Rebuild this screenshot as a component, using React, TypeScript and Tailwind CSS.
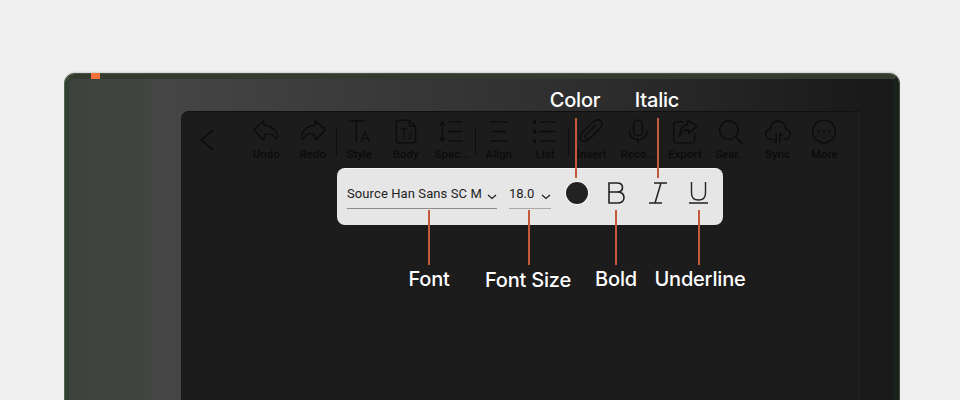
import React from 'react';

const ink = '#0b0b0b';

// Иконки панели (на тёмном фоне почти не видны, как на скриншоте)
const icons: Record<string, React.ReactNode> = {
  undo: <path d="M2 13 L13 3 L14 8 C21 8 29 13 29 21 C29 24 27 24 26 22 C24 18 19 17 15 18 L13 25 Z" />,
  redo: <path d="M30 13 L19 3 L18 8 C11 8 3 13 3 21 C3 24 5 24 6 22 C8 18 13 17 17 18 L19 25 Z" />,
  style: (
    <>
      <path d="M4 3 H22 M13 3 V27" />
      <path d="M18 27 L23 15 L28 27 M20 23 H26" strokeWidth="1.2" />
    </>
  ),
  body: (
    <>
      <path d="M8 2 H20 L27 9 V25 Q27 28 24 28 H8 Q5 28 5 25 V5 Q5 2 8 2 Z M20 2 V9 H27" />
      <path d="M10 12 H18 M14 12 V23 M19 17 H23 M19 20 H23 M19 23 H23" strokeWidth="1.3" />
    </>
  ),
  spacing: <path d="M11 4 H28 M11 15 H28 M11 26 H28 M5 5 V25 M2 8 L5 4 L8 8 M2 22 L5 26 L8 22" />,
  align: <path d="M6 4 H26 M8 15 H24 M6 26 H26" />,
  list: (
    <>
      <path d="M10 4 H28 M10 15 H28 M10 26 H28" />
      <path d="M4 3 V5 M4 14 V16 M4 25 V27" strokeWidth="3" strokeLinecap="round" />
    </>
  ),
  insert: <path d="M24 13 L13 24 C10 27 6 27 4 25 C2 23 2 19 5 16 L17 4 C20 1 24 1 26 3 C28 5 28 9 25 12 L14 22 C12 24 10 24 9 23 C8 22 8 20 10 18 L20 8" />,
  record: (
    <>
      <rect x="11" y="2" width="10" height="18" rx="5" />
      <path d="M6 14 C6 28 26 28 26 14 M16 24 V29" />
    </>
  ),
  export: (
    <>
      <path d="M14 4 H7 Q3 4 3 8 V24 Q3 28 7 28 H23 Q27 28 27 24 V17" />
      <path d="M19 2 L30 9 L20 17 V13 C15 13 11 16 10 21 C9 14 13 8 19 7 Z" />
    </>
  ),
  search: <path d="M13.5 3 A10.5 10.5 0 1 0 13.6 3 Z M21 21 L29 29" />,
  sync: (
    <>
      <path d="M10 24 H8 C4 24 2 21 2 18 C2 15 4 13 7 13 C7 7 11 3 16 3 C21 3 25 7 25 12 C28 13 30 15 30 18 C30 21 28 24 24 24 H22" />
      <path d="M14 17 V28 M11 25 L14 28 M18 28 V17 M21 20 L18 17" strokeWidth="1.4" />
    </>
  ),
  more: (
    <>
      <circle cx="16" cy="15" r="13" />
      <path d="M10 15 V15.1 M16 15 V15.1 M22 15 V15.1" strokeWidth="2.6" strokeLinecap="round" />
    </>
  ),
};

const tools: (string[] | null)[] = [
  ['undo', 'Undo'],
  ['redo', 'Redo'],
  null,
  ['style', 'Style'],
  ['body', 'Body'],
  ['spacing', 'Spac...'],
  null,
  ['align', 'Align'],
  ['list', 'List'],
  null,
  ['insert', 'Insert'],
  ['record', 'Reco...'],
  ['export', 'Export'],
  ['search', 'Sear...'],
  ['sync', 'Sync'],
  ['more', 'More'],
];

const Chevron = () => (
  <svg width="10" height="6" viewBox="0 0 10 6" fill="none" stroke="#222" strokeWidth="1.3">
    <path d="M1 1 L5 4.5 L9 1" />
  </svg>
);

const callouts = [
  { label: 'Color', x: 'left-[576px]', line: 'top-[118px] h-[60px]', text: 'left-[575px] top-[86px]' },
  { label: 'Italic', x: 'left-[658px]', line: 'top-[118px] h-[60px]', text: 'left-[657px] top-[86px]' },
  { label: 'Font', x: 'left-[429px]', line: 'top-[210px] h-[55px]', text: 'left-[429px] top-[265px]' },
  { label: 'Font Size', x: 'left-[529px]', line: 'top-[210px] h-[55px]', text: 'left-[528px] top-[266px]' },
  { label: 'Bold', x: 'left-[616px]', line: 'top-[210px] h-[55px]', text: 'left-[616px] top-[265px]' },
  { label: 'Underline', x: 'left-[699px]', line: 'top-[210px] h-[55px]', text: 'left-[700px] top-[265px]' },
];

export default function App() {
  return (
    <div className="relative h-[400px] w-[960px] overflow-hidden bg-[#f0f0f0] pl-[65px] pr-[61px] pt-[74px] font-['Roboto',sans-serif]">
      {/* Корпус планшета */}
      <div className="relative h-[340px] rounded-t-[9px] border-b-0 border-l-[4px] border-r-[6px] border-t-[5px] border-l-[#343f33] border-r-[#1a211a] border-t-[#323b2d] bg-[linear-gradient(90deg,#3e433e_0%,#414541_9%,#464646_11%,#444444_14%,#3c3c3c_31%,#2d2d2d_64%,#1a1a1a_96%)] shadow-[-1px_0_0_#4a6a4a,1px_0_0_#3a4a3a,0_-1px_0_#4b5346,0_-2px_2px_#d0d0d0]">
        <div className="absolute -top-[6px] left-[22px] h-[6px] w-[9px] bg-[#f4713a]" />
        <div className="ml-[112px] mr-[33px] mt-[32px] h-[320px] rounded-tl-[8px] border-r border-t border-r-[#222] border-t-[#101010] bg-[#1c1c1c]">
          {/* Панель инструментов */}
          <div className="flex h-[57px] items-start pl-[3px] pt-[6px]">
            <div className="flex w-[59px] justify-start pl-[14px] pt-[10px]">
              <svg width="20" height="24" viewBox="0 0 20 24" fill="none" stroke={ink} strokeWidth="1.6">
                <path d="M15 2 L3 12 L15 22" />
              </svg>
            </div>
            {tools.map((t, i) =>
              t ? (
                <div key={t[1]} className="flex w-[46.5px] flex-col items-center">
                  <svg
                    width="28"
                    height="27"
                    viewBox="0 0 32 30"
                    fill="none"
                    stroke={ink}
                    strokeWidth="1.5"
                    strokeLinejoin="round"
                  >
                    {icons[t[0]]}
                  </svg>
                  <span className="mt-[2px] whitespace-nowrap text-[11.5px] font-medium leading-[14px] text-[#0b0b0b]">
                    {t[1]}
                  </span>
                </div>
              ) : (
                <div key={i} className="-mx-[0.5px] mt-[10px] h-[28px] w-px bg-[#0e0e0e]" />
              ),
            )}
          </div>
        </div>
      </div>

      {/* Всплывающая панель форматирования */}
      <div className="absolute left-[337px] top-[168px] flex h-[57px] w-[386px] items-start rounded-[8px] border-t border-t-[#f5f5f5] bg-[#e6e6e6] pl-[10px] text-[#222]">
        <div className="mt-[16px] flex h-[24px] w-[150px] items-start justify-between border-b-[1.5px] border-b-[#8c8c8c]">
          <span className="whitespace-nowrap text-[13px] tracking-[0.1px] leading-[18px]">Source Han Sans SC M</span>
          <span className="mt-[9px]"><Chevron /></span>
        </div>
        <div className="ml-[12px] mt-[16px] flex h-[24px] w-[42px] items-start justify-between border-b-[1.5px] border-b-[#a8a8a8]">
          <span className="text-[13px] leading-[18px]">18.0</span>
          <span className="mt-[9px]"><Chevron /></span>
        </div>
        <div className="ml-[15px] mt-[13px] h-[22px] w-[22px] rounded-full bg-[#222] shadow-[0_0_0_1px_#f5f5f5]" />
        <svg className="ml-[18px] mt-[11px]" width="20" height="26" viewBox="0 0 20 26" fill="none" stroke="#222" strokeWidth="1.6">
          <path d="M3 3 H11 C15 3 16.500 5 16.500 7.500 C16.500 10 15 12 11 12 H3 Z M11 12 C16 12 18 14 18 17.500 C18 21 16 23 11 23 H3 V3" />
        </svg>
        <svg className="ml-[22px] mt-[10px]" width="20" height="26" viewBox="0 0 20 26" fill="none" stroke="#222" strokeWidth="1.5">
          <path d="M6 4 H19 M1 24 H14 M13 4 L7 24" />
        </svg>
        <svg className="ml-[21px] mt-[11px]" width="19" height="26" viewBox="0 0 19 26" fill="none" stroke="#222" strokeWidth="1.4">
          <path d="M2.500 2 V13 C2.500 17.500 5 20 9.500 20 C14 20 16.500 17.500 16.500 13 V2 M0 23 H19" />
        </svg>
      </div>

      {/* Подписи-выноски */}
      {callouts.map((c) => (
        <React.Fragment key={c.label}>
          <div className={`absolute w-[2px] -translate-x-1/2 bg-[#c4593b] ${c.x} ${c.line}`} />
          <span className={`absolute -translate-x-1/2 whitespace-nowrap font-['Inter',sans-serif] text-[20px] font-medium leading-[28px] tracking-[-0.2px] text-white ${c.text}`}>
            {c.label}
          </span>
        </React.Fragment>
      ))}
    </div>
  );
}
